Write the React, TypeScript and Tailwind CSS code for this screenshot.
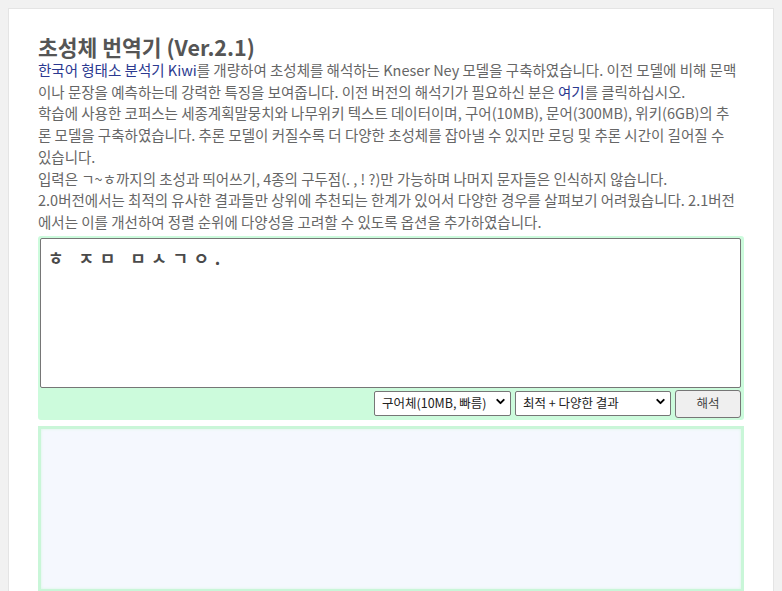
import { ChevronDown } from "lucide-react"

const lines: React.ReactNode[] = [
  <>
    <a href="#" className="text-[#2b3990]">한국어 형태소 분석기 Kiwi</a>를 개량하여 초성체를 해석하는 Kneser Ney 모델을 구축하였습니다. 이전 모델에 비해 문맥
  </>,
  <>
    이나 문장을 예측하는데 강력한 특징을 보여줍니다. 이전 버전의 해석기가 필요하신 분은 <a href="#" className="text-[#2b3990]">여기</a>를 클릭하십시오.
  </>,
  "학습에 사용한 코퍼스는 세종계획말뭉치와 나무위키 텍스트 데이터이며, 구어(10MB), 문어(300MB), 위키(6GB)의 추",
  "론 모델을 구축하였습니다. 추론 모델이 커질수록 더 다양한 초성체를 잡아낼 수 있지만 로딩 및 추론 시간이 길어질 수",
  "있습니다.",
  "입력은 ㄱ~ㅎ까지의 초성과 띄어쓰기, 4종의 구두점(. , ! ?)만 가능하며 나머지 문자들은 인식하지 않습니다.",
  "2.0버전에서는 최적의 유사한 결과들만 상위에 추천되는 한계가 있어서 다양한 경우를 살펴보기 어려웠습니다. 2.1버전",
  "에서는 이를 개선하여 정렬 순위에 다양성을 고려할 수 있도록 옵션을 추가하였습니다.",
]

function Select({ width, value, options }: { width: string; value: string; options: string[] }) {
  return (
    <div className={`relative ${width}`}>
      <select
        defaultValue={value}
        className="w-full h-[25px] appearance-none bg-white border border-[#767676] rounded-[2px] pl-[7px] pr-6 text-[12.5px] text-[#222] outline-none"
      >
        {options.map((o) => (
          <option key={o}>{o}</option>
        ))}
      </select>
      <ChevronDown className="absolute right-[4px] top-[6px] w-[13px] h-[13px] text-black pointer-events-none" strokeWidth={3.5} />
    </div>
  )
}

export default function App() {
  return (
    <div className="min-h-screen bg-[#f1f1f1] pt-2 px-2 font-['Noto_Sans_CJK_KR',sans-serif]">
      <div className="bg-white border border-[#e4e4e4] min-h-[600px] pt-[26px] px-[29px]">
        <h1 className="text-[21.5px] leading-[24px] font-bold text-[#555]">초성체 번역기 (Ver.2.1)</h1>

        <div className="text-[14.5px] leading-[21.7px] text-[#666]">
          {lines.map((line, i) => (
            <div key={i} className="whitespace-nowrap">
              {line}
            </div>
          ))}
        </div>

        <div className="mt-[3px] bg-[#ccfbdc] rounded-[3px] pt-[2px] pl-[2px] pr-[3px] pb-[2px]">
          <textarea
            defaultValue="ㅎ ㅈㅁ ㅁㅅㄱㅇ."
            className="block w-full h-[150px] resize-none bg-white border border-[#767676] rounded-[2px] pt-[9px] px-[7px] text-[17px] leading-[20px] font-bold tracking-[5.5px] text-[#4a4a4a] outline-none"
          />
          <div className="flex justify-end items-start gap-[4px] mt-px">
            <Select width="w-[137px]" value="구어체(10MB, 빠름)" options={["구어체(10MB, 빠름)", "문어체(300MB)", "위키(6GB)"]} />
            <Select width="w-[156px]" value="최적 + 다양한 결과" options={["최적 + 다양한 결과", "최적 결과"]} />
            <button className="mt-px w-[66px] h-[28px] bg-[#efefef] border border-[#767676] rounded-[3px] text-[12.5px] text-[#444]">
              해석
            </button>
          </div>
        </div>

        <div className="mt-[6px] h-[166px] border-[3px] border-[#c9f6d8] bg-[#f5f8fe] shadow-[inset_0_0_3px_#d6f7e2]" />
      </div>
    </div>
  )
}
